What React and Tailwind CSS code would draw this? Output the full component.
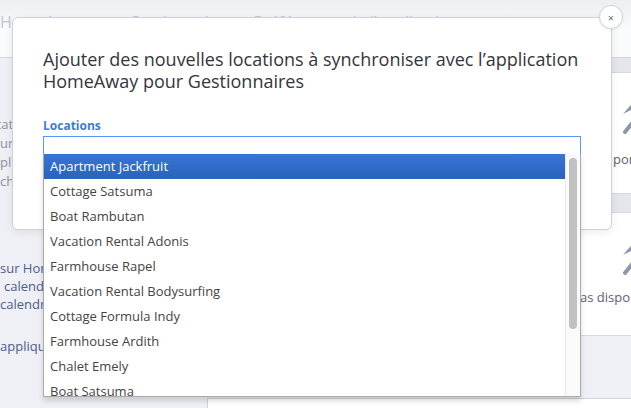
import React from "react";

const locations = [
  "Apartment Jackfruit",
  "Cottage Satsuma",
  "Boat Rambutan",
  "Vacation Rental Adonis",
  "Farmhouse Rapel",
  "Vacation Rental Bodysurfing",
  "Cottage Formula Indy",
  "Farmhouse Ardith",
  "Chalet Emely",
  "Boat Satsuma",
  "Cottage Rambutan",
];

function SyncIcon() {
  return (
    <svg width="40" height="34" viewBox="0 0 40 34" fill="none">
      <path d="M26 14 L38 0 L34 10 Z" fill="#8f96ab" />
      <path d="M28 32 L36 22" stroke="#8f96ab" strokeWidth="4" strokeLinecap="round" />
    </svg>
  );
}

export default function App() {
  return (
    <div
      className="relative w-[631px] h-[408px] overflow-hidden bg-[#eef0f5]"
      style={{ fontFamily: '"Open Sans", "Noto Sans", sans-serif' }}
    >
      {/* page behind the modal */}
      <div className="h-[58px] border-b border-[#d3d6df] bg-gradient-to-b from-[#eceef2] via-[#fafbfc] to-[#fbfbfc] flex items-start pt-[11px]">
        <span className="text-[16px] leading-[22px] text-[#c3c7d2] whitespace-nowrap">
          HomeAway pour Gestionnaires&nbsp;&nbsp;›&nbsp;&nbsp;Préférences de l’application
        </span>
      </div>

      <div className="flex">
        <div className="w-[207px] shrink-0 flex flex-col text-[13px] whitespace-nowrap overflow-hidden">
          <div className="pt-[57px] flex flex-col leading-[19px] text-[#8b91a3]">
            <span className="-ml-[5px]">cation</span>
            <span>ur les</span>
            <span>plication</span>
            <span>changements</span>
          </div>
          <div className="mt-[68px] flex flex-col leading-[18px] text-[#4d5b92]">
            <span>sur HomeAway</span>
            <span className="pl-[4px]">calendrier</span>
            <span>calendrier</span>
          </div>
          <div className="mt-[24px] leading-[18px] text-[#4d5b92]">
            <span>appliquer</span>
          </div>
        </div>

        <div className="flex-1 min-w-0 flex flex-col overflow-hidden">
          <div className="h-[15px] bg-[#e4e6ec] border-b border-[#d6d9e1]" />
          <div className="h-[120px] bg-white flex flex-col text-[13px] text-[#5b6275]">
            <div className="mt-[27px] self-end -mr-[6px]">
              <SyncIcon />
            </div>
            <span className="mt-[16px] pl-[406px] whitespace-nowrap">ponible</span>
          </div>
          <div className="h-[20px] bg-[#e4e6ec] border-y border-[#d6d9e1]" />
          <div className="h-[122px] bg-white flex flex-col text-[13px] text-[#5b6275]">
            <div className="mt-[28px] self-end -mr-[6px]">
              <SyncIcon />
            </div>
            <span className="mt-[13px] pl-[373px] whitespace-nowrap">as disponible</span>
          </div>
          <div className="h-[63px] border-t border-[#d6d9e1]" />
          <div className="h-[40px] bg-white border-t border-l border-[#d1d4dd]" />
        </div>
      </div>

      {/* modal */}
      <div className="absolute left-[12px] top-[17px] w-[600px] h-[213px] bg-white rounded-[6px] border border-[#cdd1db] shadow-[0_2px_8px_rgba(0,0,0,0.08)]">
        <div className="pl-[30px] pr-[20px] pt-[30px]">
          <h2 className="text-[18px] leading-[22px] text-[#33363d] font-normal">
            Ajouter des nouvelles locations à synchroniser avec l’application HomeAway pour Gestionnaires
          </h2>
          <label className="block mt-[25px] text-[12px] leading-[17px] font-bold text-[#3b7dd0]">Locations</label>
          <div className="relative mt-[2px] w-[538px]">
            <div className="h-[19px] border border-[#5897fb] bg-white" />
            <div className="absolute left-0 top-[18px] w-[538px] h-[243px] bg-white border border-t-0 border-[#aaaaaa] shadow-[0_4px_5px_rgba(0,0,0,0.15)] flex overflow-hidden z-10">
              <ul className="flex-1 text-[13px] leading-[15px] text-[#444444]">
                {locations.map((name, i) => (
                  <li
                    key={name}
                    className={
                      i === 0
                        ? "px-[6px] py-[5px] whitespace-nowrap text-white bg-gradient-to-b from-[#3875d7] to-[#2a62bc]"
                        : "px-[6px] py-[5px] whitespace-nowrap"
                    }
                  >
                    {name}
                  </li>
                ))}
              </ul>
              <div className="w-[15px] shrink-0 bg-[#fafafa] border-l border-[#ebebeb] pt-[4px] flex justify-center">
                <div className="w-[8px] h-[171px] rounded-full bg-[#c1c1c1]" />
              </div>
            </div>
          </div>
        </div>
      </div>

      {/* close button */}
      <button className="absolute left-[599px] top-[5px] w-[24px] h-[24px] rounded-full bg-white border border-[#cfd3dc] shadow-[0_1px_3px_rgba(0,0,0,0.08)] flex items-center justify-center text-[11px] leading-none text-[#666a73]">
        ×
      </button>
    </div>
  );
}
